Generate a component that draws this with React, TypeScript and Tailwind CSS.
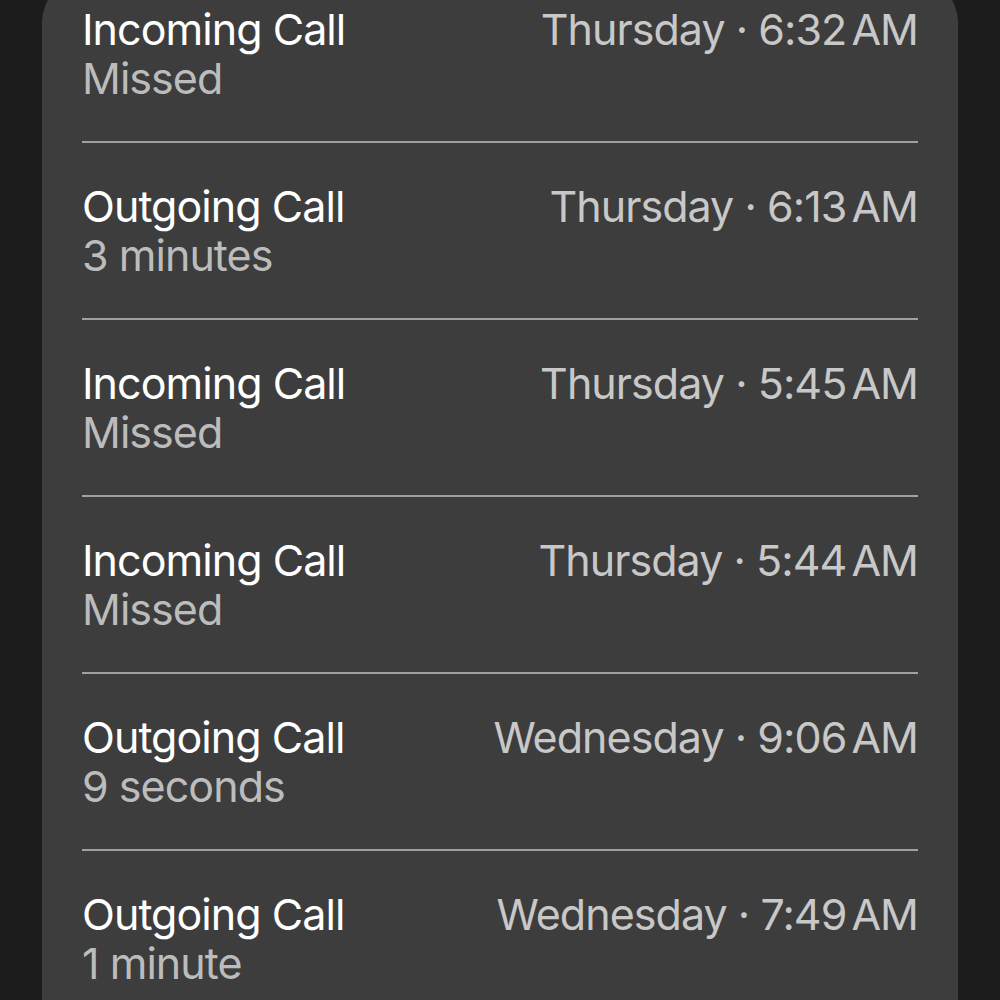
const CALLS = [
  { title: "Incoming Call", detail: "Missed", day: "Thursday", time: "6:32", ampm: "AM" },
  { title: "Outgoing Call", detail: "3 minutes", day: "Thursday", time: "6:13", ampm: "AM" },
  { title: "Incoming Call", detail: "Missed", day: "Thursday", time: "5:45", ampm: "AM" },
  { title: "Incoming Call", detail: "Missed", day: "Thursday", time: "5:44", ampm: "AM" },
  { title: "Outgoing Call", detail: "9 seconds", day: "Wednesday", time: "9:06", ampm: "AM" },
  { title: "Outgoing Call", detail: "1 minute", day: "Wednesday", time: "7:49", ampm: "AM" },
];

export default function App() {
  return (
    <div
      className="h-[1000px] w-[1000px] overflow-hidden bg-[#1c1c1c] px-[42px]"
      style={{ fontFamily: "Inter, 'Noto Sans', sans-serif" }}
    >
      <div className="mt-[-21px] h-[1100px] rounded-t-[43px] bg-[#3d3d3d] px-[40px]">
        {CALLS.map((call, i) => (
          <div
            key={i}
            className={
              i === 0
                ? "flex justify-between pt-[26px] pb-[38px]"
                : "flex justify-between border-t-2 border-[#a0a0a0] pt-[39px] pb-[38px]"
            }
          >
            <div className="flex flex-col text-[43px] leading-[49px] tracking-[-0.95px]">
              <span className="text-white">{call.title}</span>
              <span className="text-[#bcbcbc]">{call.detail}</span>
            </div>
            <div className="flex text-[43px] leading-[49px] tracking-[-0.95px] text-[#c8c8c8]">
              <span>
                {call.day} · {call.time}
              </span>
              <span className="ml-[5px]">{call.ampm}</span>
            </div>
          </div>
        ))}
      </div>
    </div>
  );
}
